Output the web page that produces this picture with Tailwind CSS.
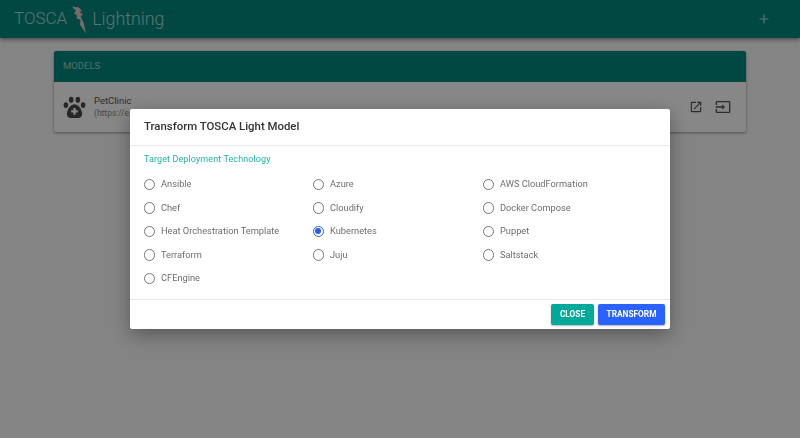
<!DOCTYPE html>
<html lang="en">
<head>
    <meta charset="UTF-8">
    <title>TOSCA Lightning</title>
    <script src="https://cdn.jsdelivr.net/npm/@tailwindcss/browser@4"></script>
</head>
<body class="bg-[#fafafa] h-[438px] overflow-hidden font-['Roboto',sans-serif]">

    <!-- Toolbar -->
    <header class="h-[38px] bg-[#00897b] shadow-[0_2px_4px_rgba(0,0,0,0.4)] flex items-center justify-between pl-[14px] pr-[31px] text-white/70">
        <div class="flex items-center font-light">
            <span class="text-[17px]">TOSCA</span>
            <svg class="w-[16px] h-[28px] ml-[4px] mt-[1px]" viewBox="0 0 16 28">
                <path d="M1 0.500 L8 1.500 L11 5 L8.500 6 L12 9 L9.500 10 L13 18 L15 27.500 L9 18.500 L9.500 14 L5 12 L6.500 10 L3 7 L5 5 Z" fill="#e6c9c4"/>
            </svg>
            <span class="text-[17.800px] ml-[5px]">Lightning</span>
        </div>
        <svg class="w-[10px] h-[10px]" viewBox="0 0 10 10"><path d="M5 0.500V9.500M0.500 5H9.500" stroke="currentColor" stroke-width="1.200"/></svg>
    </header>

    <!-- Models card -->
    <main class="px-[54px] pt-[13px]">
        <div class="rounded-[2px] shadow-[0_1px_3px_rgba(0,0,0,0.4)] bg-white">
            <div class="h-[31px] bg-[#00897b] flex items-center px-[9px] text-[9.500px] text-white/60 rounded-t-[2px]">MODELS</div>
            <div class="h-[50px] flex items-center pl-[9px] pr-[15px]">
                <svg class="w-[23px] h-[23px] text-[#4a4a4a]" viewBox="0 0 24 24">
                    <g fill="currentColor">
                        <ellipse cx="3" cy="9.500" rx="2.400" ry="3"/>
                        <ellipse cx="8.500" cy="4" rx="2.400" ry="3.200"/>
                        <ellipse cx="15.500" cy="4" rx="2.400" ry="3.200"/>
                        <ellipse cx="21" cy="9.500" rx="2.400" ry="3"/>
                        <path d="M12 8.500c-4 0-8 6-8 10 0 3 2 4.500 4 4.500h8c2 0 4-1.500 4-4.500 0-4-4-10-8-10z"/>
                    </g>
                    <path d="M12 12.500v7M8.500 16h7" stroke="#fff" stroke-width="2.400"/>
                </svg>
                <div class="ml-[8px] leading-[12px]">
                    <div class="text-[9.500px] text-[#555]">PetClinic</div>
                    <div class="text-[8.500px] text-[#888]">(https://example.org)</div>
                </div>
                <div class="ml-auto flex items-center gap-[12px] text-[#555]">
                    <svg class="w-[14px] h-[14px]" viewBox="0 0 24 24" fill="currentColor"><path d="M19 19H5V5h7V3H5a2 2 0 0 0-2 2v14a2 2 0 0 0 2 2h14a2 2 0 0 0 2-2v-7h-2v7zM14 3v2h3.590l-9.830 9.830 1.410 1.410L19 6.410V10h2V3h-7z"/></svg>
                    <svg class="w-[16px] h-[16px]" viewBox="0 0 24 24" fill="currentColor"><path d="M21 3.010H3c-1.100 0-2 .9-2 2V9h2V4.990h18v14.030H3V15H1v4.010c0 1.100.9 1.980 2 1.980h18c1.100 0 2-.88 2-1.980v-14a2 2 0 0 0-2-2zM11 16l4-4-4-4v3H1v2h10v3z"/></svg>
                </div>
            </div>
        </div>
    </main>

    <!-- Scrim -->
    <div class="fixed inset-0 bg-[rgba(0,0,0,0.47)]"></div>

    <!-- Dialog -->
    <div class="fixed inset-0 flex justify-center items-start pt-[109px]">
        <div class="w-[540px] h-[220px] bg-white rounded-[2px] shadow-[0_6px_20px_rgba(0,0,0,0.35)] flex flex-col">
            <div class="h-[37px] border-b border-[#e8e8e8] flex items-center px-[14px] text-[11.400px] font-medium text-[#333]">Transform TOSCA Light Model</div>
            <div class="flex-1 px-[14px]">
                <div class="text-[9px] text-[#1fb3a5] mt-[7px] leading-[12px] tracking-[0.100px]">Target Deployment Technology</div>
                <div class="grid grid-cols-[169px_170px_1fr] auto-rows-[23.500px] mt-[7.500px] -ml-[0.500px] text-[9.250px] text-[#6e6e6e] items-center">
                    <label class="flex items-center gap-[6px]"><span class="w-[11.500px] h-[11.500px] rounded-full border-[1.300px] border-[#777]"></span>Ansible</label>
                    <label class="flex items-center gap-[6px]"><span class="w-[11.500px] h-[11.500px] rounded-full border-[1.300px] border-[#777]"></span>Azure</label>
                    <label class="flex items-center gap-[6px]"><span class="w-[11.500px] h-[11.500px] rounded-full border-[1.300px] border-[#777]"></span>AWS CloudFormation</label>
                    <label class="flex items-center gap-[6px]"><span class="w-[11.500px] h-[11.500px] rounded-full border-[1.300px] border-[#777]"></span>Chef</label>
                    <label class="flex items-center gap-[6px]"><span class="w-[11.500px] h-[11.500px] rounded-full border-[1.300px] border-[#777]"></span>Cloudify</label>
                    <label class="flex items-center gap-[6px]"><span class="w-[11.500px] h-[11.500px] rounded-full border-[1.300px] border-[#777]"></span>Docker Compose</label>
                    <label class="flex items-center gap-[6px]"><span class="w-[11.500px] h-[11.500px] rounded-full border-[1.300px] border-[#777]"></span>Heat Orchestration Template</label>
                    <label class="flex items-center gap-[6px]"><span class="w-[11.500px] h-[11.500px] rounded-full border-[1.300px] border-[#2a5cf0] flex items-center justify-center"><span class="w-[6px] h-[6px] rounded-full bg-[#2a5cf0] shrink-0"></span></span>Kubernetes</label>
                    <label class="flex items-center gap-[6px]"><span class="w-[11.500px] h-[11.500px] rounded-full border-[1.300px] border-[#777]"></span>Puppet</label>
                    <label class="flex items-center gap-[6px]"><span class="w-[11.500px] h-[11.500px] rounded-full border-[1.300px] border-[#777]"></span>Terraform</label>
                    <label class="flex items-center gap-[6px]"><span class="w-[11.500px] h-[11.500px] rounded-full border-[1.300px] border-[#777]"></span>Juju</label>
                    <label class="flex items-center gap-[6px]"><span class="w-[11.500px] h-[11.500px] rounded-full border-[1.300px] border-[#777]"></span>Saltstack</label>
                    <label class="flex items-center gap-[6px]"><span class="w-[11.500px] h-[11.500px] rounded-full border-[1.300px] border-[#777]"></span>CFEngine</label>
                </div>
            </div>
            <div class="h-[30px] border-t border-[#e8e8e8] flex items-center justify-end gap-[4px] pr-[5px]">
                <button class="w-[43px] h-[21px] rounded-[2px] bg-[#00a99a] text-white text-[8.300px] font-bold shadow-[0_1px_2px_rgba(0,0,0,0.3)]">CLOSE</button>
                <button class="w-[67px] h-[21px] rounded-[2px] bg-[#2962ff] text-white text-[8.300px] font-bold shadow-[0_1px_2px_rgba(0,0,0,0.3)]">TRANSFORM</button>
            </div>
        </div>
    </div>

</body>
</html>
